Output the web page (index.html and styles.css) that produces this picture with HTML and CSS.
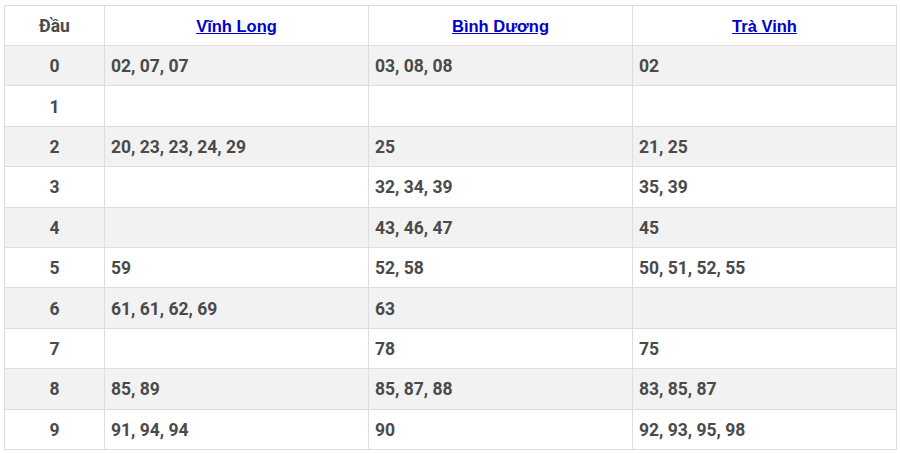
FILE: index.html
```html
<!DOCTYPE html>
<html lang="vi">
<head>
<meta charset="utf-8">
<link rel="stylesheet" href="styles.css">
</head>
<body>
<table class="loto">
  <colgroup>
    <col class="c-dau">
    <col class="c-prov">
    <col class="c-prov">
    <col class="c-prov">
  </colgroup>
  <thead>
    <tr>
      <th class="dau">Đầu</th>
      <th><a href="#">Vĩnh Long</a></th>
      <th><a href="#">Bình Dương</a></th>
      <th><a href="#">Trà Vinh</a></th>
    </tr>
  </thead>
  <tbody>
    <tr><td class="dau">0</td><td>02, 07, 07</td><td>03, 08, 08</td><td>02</td></tr>
    <tr><td class="dau">1</td><td></td><td></td><td></td></tr>
    <tr><td class="dau">2</td><td>20, 23, 23, 24, 29</td><td>25</td><td>21, 25</td></tr>
    <tr><td class="dau">3</td><td></td><td>32, 34, 39</td><td>35, 39</td></tr>
    <tr><td class="dau">4</td><td></td><td>43, 46, 47</td><td>45</td></tr>
    <tr><td class="dau">5</td><td>59</td><td>52, 58</td><td>50, 51, 52, 55</td></tr>
    <tr><td class="dau">6</td><td>61, 61, 62, 69</td><td>63</td><td></td></tr>
    <tr><td class="dau">7</td><td></td><td>78</td><td>75</td></tr>
    <tr><td class="dau">8</td><td>85, 89</td><td>85, 87, 88</td><td>83, 85, 87</td></tr>
    <tr><td class="dau">9</td><td>91, 94, 94</td><td>90</td><td>92, 93, 95, 98</td></tr>
  </tbody>
</table>
</body>
</html>
```
FILE: styles.css
```css
html, body {
  margin: 0;
  padding: 0;
  background: #fff;
}
body {
  padding: 5px 4px 0 4px;
}
.loto {
  width: 892px;
  height: 445px;
  border-collapse: collapse;
  table-layout: fixed;
  font-family: Roboto, "Liberation Sans", Arial, sans-serif;
  font-size: 17.5px;
  font-weight: bold;
  color: #4a4a4a;
}
.c-dau { width: 100px; }
.c-prov { width: 264px; }
.loto th, .loto td {
  border: 1px solid #ddd;
  height: 38px;
  padding: 1px 6px 0 6px;
  text-align: left;
  vertical-align: middle;
}
.loto th {
  text-align: center;
}
.loto th a {
  font-family: "Liberation Sans", Arial, sans-serif;
  font-size: 16.5px;
  color: #0000cc;
  text-decoration: underline;
}
.loto .dau {
  text-align: center;
}
.loto tbody tr:nth-child(odd) {
  background: #f2f2f2;
}
```
